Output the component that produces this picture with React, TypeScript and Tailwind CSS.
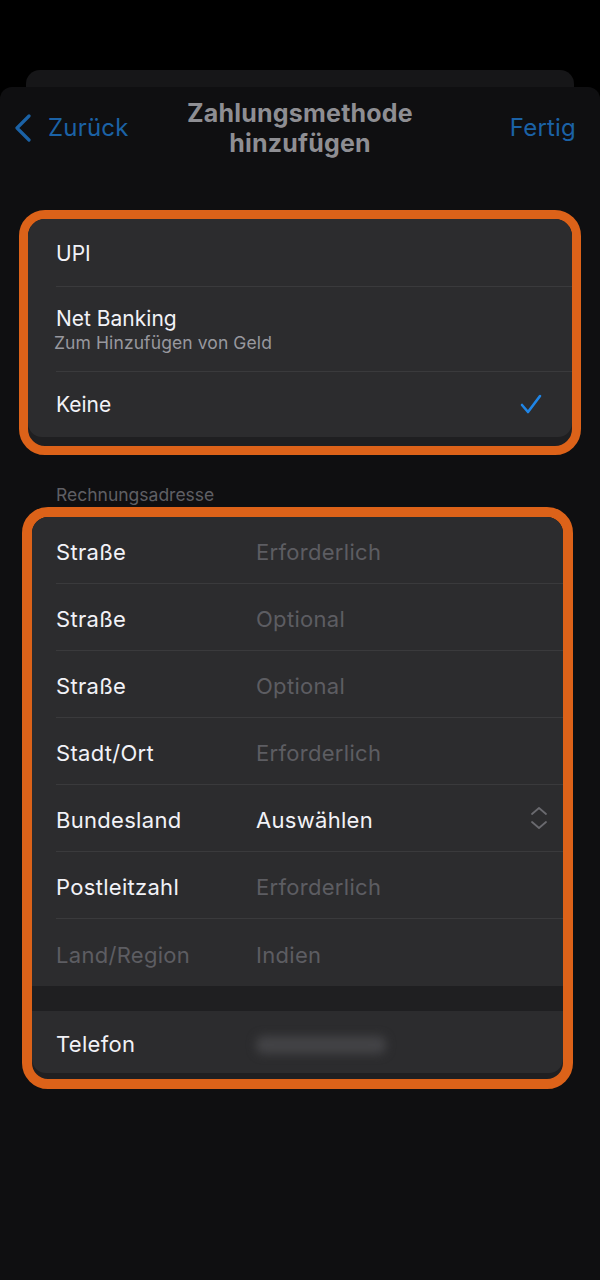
import React from "react";

function Row({
  label,
  value,
  labelClass = "text-[#f2f2f7]",
  valueClass = "text-[#5d5d62]",
  last = false,
  right,
}: {
  label: string;
  value: React.ReactNode;
  labelClass?: string;
  valueClass?: string;
  last?: boolean;
  right?: React.ReactNode;
}) {
  return (
    <div className="pl-[24px]">
      <div className={`h-[67px] flex items-center pt-[5px] ${last ? "" : "border-b border-[#3a3a3c]"}`}>
        <div className={`w-[200px] text-[22px] tracking-[0.3px] ${labelClass}`}>{label}</div>
        <div className={`flex-1 text-[22px] tracking-[0.3px] ${valueClass}`}>{value}</div>
        {right}
      </div>
    </div>
  );
}

export default function App() {
  return (
    <div className="w-[600px] h-[1280px] bg-black overflow-hidden font-['Inter',sans-serif]">
      <div className="pt-[70px]">
        <div className="mx-[26px] h-[17px] rounded-t-[14px] bg-[#161618]" />
        <div className="h-[1193px] rounded-t-[12px] bg-[#0f0f11]">
          {/* Nav */}
          <div className="flex items-center pt-[11px] px-[14px]">
            <div className="flex items-center w-[160px]">
              <svg width="18" height="28" viewBox="0 0 18 28" fill="none">
                <path d="M15 2 L3 14 L15 26" stroke="#1b62a6" strokeWidth="3.2" strokeLinecap="round" strokeLinejoin="round" />
              </svg>
              <span className="ml-[16px] text-[24px] tracking-[0.2px] text-[#1b62a6]">Zurück</span>
            </div>
            <div className="flex-1 text-center text-[25px] leading-[30px] font-bold tracking-[0.2px] text-[#8e8e93]">
              Zahlungsmethode
              <br />
              hinzufügen
            </div>
            <div className="w-[160px] text-right pr-[10px] text-[24px] tracking-[0.2px] text-[#1b62a6]">Fertig</div>
          </div>

          {/* Box 1 */}
          <div className="mt-[52px] mx-[19px] border-[9px] border-[#dc6219] rounded-[26px] overflow-hidden bg-[#1f1f21]">
            <div className="bg-[#2c2c2e] rounded-b-[14px] pl-[28px]">
              <div className="h-[68px] flex items-center pt-[2px] border-b border-[#3a3a3c] text-[21px] text-[#f2f2f7]">UPI</div>
              <div className="h-[85px] flex flex-col justify-center border-b border-[#3a3a3c]">
                <div className="text-[21px] leading-[27px] text-[#f2f2f7]">Net Banking</div>
                <div className="text-[17.5px] leading-[22px] tracking-[0.1px] text-[#98989e] -ml-[2px]">Zum Hinzufügen von Geld</div>
              </div>
              <div className="h-[65px] flex items-center justify-between pr-[30px] text-[21px] text-[#f2f2f7]">
                <span>Keine</span>
                <svg width="22" height="22" viewBox="0 0 22 22" fill="none">
                  <path d="M2 11 L8 18 L20 2" stroke="#1f85e6" strokeWidth="2.6" strokeLinecap="round" strokeLinejoin="round" />
                </svg>
              </div>
            </div>
            <div className="h-[9px]" />
          </div>

          {/* Section header */}
          <div className="mt-[30px] pl-[56px] text-[17.5px] leading-[20px] text-[#5f5f64]">Rechnungsadresse</div>

          {/* Box 2 */}
          <div className="mt-[2px] ml-[22px] mr-[27px] border-[10px] border-[#dc6219] rounded-[26px] overflow-hidden bg-[#1f1f21]">
            <div className="bg-[#2c2c2e]">
              <Row label="Straße" value="Erforderlich" />
              <Row label="Straße" value="Optional" />
              <Row label="Straße" value="Optional" />
              <Row label="Stadt/Ort" value="Erforderlich" />
              <Row
                label="Bundesland"
                value="Auswählen"
                valueClass="text-[#f2f2f7]"
                right={
                  <svg className="mr-[14px] -mt-[5px]" width="20" height="26" viewBox="0 0 20 26" fill="none">
                    <path d="M3 9 L10 3 L17 9" stroke="#6a6a6f" strokeWidth="1.8" strokeLinecap="round" strokeLinejoin="round" />
                    <path d="M3 17 L10 23 L17 17" stroke="#6a6a6f" strokeWidth="1.8" strokeLinecap="round" strokeLinejoin="round" />
                  </svg>
                }
              />
              <Row label="Postleitzahl" value="Erforderlich" />
              <Row label="Land/Region" value="Indien" labelClass="text-[#5d5d62]" last />
            </div>
            <div className="h-[25px] bg-[#1f1f21]" />
            <div className="bg-[#2c2c2e] rounded-b-[14px]">
              <div className="pl-[24px]">
                <div className="h-[62px] flex items-center pt-[5px]">
                  <div className="w-[200px] text-[22px] tracking-[0.3px] text-[#f2f2f7]">Telefon</div>
                  <div className="w-[130px] h-[18px] rounded-[8px] bg-[#434346] blur-[5px]" />
                </div>
              </div>
            </div>
            <div className="h-[6px]" />
          </div>
        </div>
      </div>
    </div>
  );
}
